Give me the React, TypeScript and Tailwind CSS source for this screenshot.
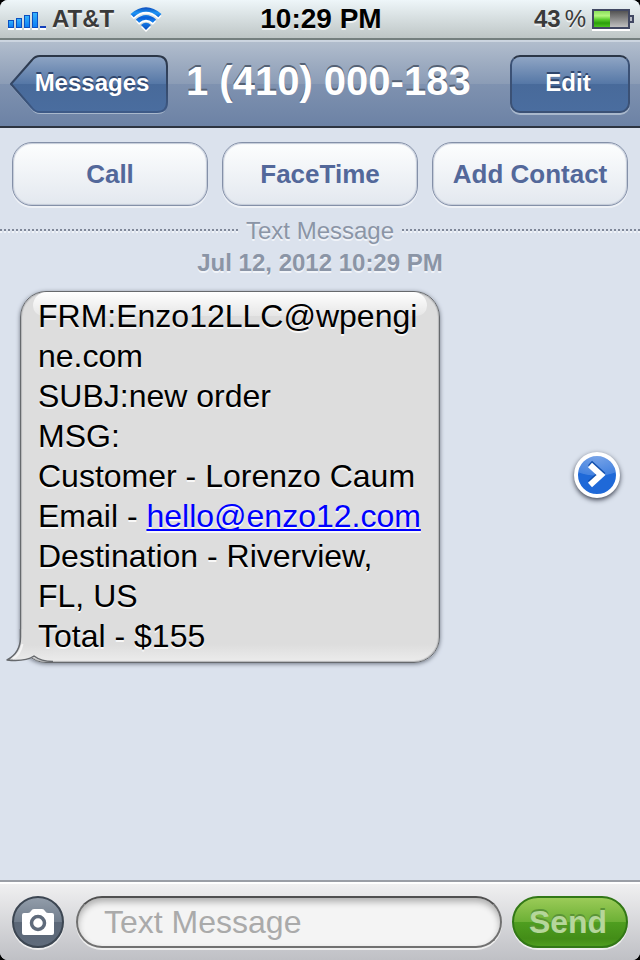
import React from "react";

function SignalIcon() {
  return (
    <svg width="40" height="18" viewBox="0 0 40 18" aria-label="Signal strength">
      <defs>
        <linearGradient id="bar" x1="0" y1="0" x2="0" y2="1">
          <stop offset="0" stopColor="#36b4fb" />
          <stop offset="1" stopColor="#0a7cf5" />
        </linearGradient>
      </defs>
      <g fill="#fff">
        <rect x="0" y="16" width="6" height="2" />
        <rect x="8" y="16" width="6" height="2" />
        <rect x="16" y="16" width="6" height="2" />
        <rect x="24" y="16" width="6" height="2" />
        <rect x="32" y="16" width="6" height="2" />
      </g>
      <g fill="url(#bar)" stroke="#0c4fc0">
        <rect x="0.5" y="8.5" width="5" height="7" />
        <rect x="8.5" y="6.5" width="5" height="9" />
        <rect x="16.5" y="3.5" width="5" height="12" />
        <rect x="24.5" y="0.5" width="5" height="15" />
      </g>
      <rect x="32" y="14" width="6" height="2" fill="#1440bb" />
    </svg>
  );
}

function WifiShape() {
  return (
    <>
      <path d="M0.5 7 Q16 -6.5 31.5 7 L28.3 10.2 Q16 -0.5 3.7 10.2 Z" />
      <path d="M5.9 12.6 Q16 3.4 26.1 12.6 L22.9 15.8 Q16 9.6 9.1 15.8 Z" />
      <path d="M11 18 Q16 13.6 21 18 L16 23 Z" />
    </>
  );
}

function WifiIcon() {
  return (
    <svg width="32" height="26" viewBox="0 0 32 26" aria-label="Wi-Fi">
      <defs>
        <linearGradient id="wifi" x1="0" y1="0" x2="0" y2="24" gradientUnits="userSpaceOnUse">
          <stop offset="0" stopColor="#0a47b8" />
          <stop offset="0.25" stopColor="#1f96f5" />
          <stop offset="0.45" stopColor="#0a5fd6" />
          <stop offset="0.6" stopColor="#1580ee" />
          <stop offset="1" stopColor="#0648b8" />
        </linearGradient>
      </defs>
      <g fill="#fff" transform="translate(0 2)">
        <WifiShape />
      </g>
      <g fill="url(#wifi)">
        <WifiShape />
      </g>
    </svg>
  );
}

function BatteryIcon() {
  return (
    <svg width="42" height="22" viewBox="0 0 42 22" aria-label="Battery">
      <defs>
        <linearGradient id="charge" x1="0" y1="0" x2="0" y2="1">
          <stop offset="0" stopColor="#8be05c" />
          <stop offset="0.3" stopColor="#b4f77e" />
          <stop offset="0.55" stopColor="#55cb27" />
          <stop offset="0.75" stopColor="#2a9d0a" />
          <stop offset="1" stopColor="#4cc51f" />
        </linearGradient>
        <linearGradient id="empty" x1="0" y1="0" x2="0" y2="1">
          <stop offset="0" stopColor="#4d4d4d" />
          <stop offset="1" stopColor="#c6c6c6" />
        </linearGradient>
      </defs>
      <rect x="0" y="20" width="38" height="2" fill="#fff" />
      <rect x="1" y="1" width="36" height="18" fill="url(#empty)" stroke="#414862" strokeWidth="2" />
      <rect x="2" y="2" width="16" height="16" fill="url(#charge)" />
      <path d="M38 7 H41 V13 H38" fill="#b9bcc6" stroke="#414862" strokeWidth="2" />
    </svg>
  );
}

function StatusBar() {
  return (
    <header className="grid h-10 grid-cols-[1fr_auto_1fr] items-center border-b-2 border-[#75807f] bg-linear-to-b from-[#eef6f9] to-[#bec6c6] pr-1.5 pl-2 text-2xl font-bold text-[#3a3a3a] [text-shadow:0_2px_0_#ffffffb0]">
      <div className="flex items-center">
        <span className="mt-1">
          <SignalIcon />
        </span>
        <span className="ml-1">AT&amp;T</span>
        <span className="ml-4 pt-0.5">
          <WifiIcon />
        </span>
      </div>
      <time className="text-[28px] text-black">10:29 PM</time>
      <div className="flex items-center justify-end">
        <span>43</span>
        <span className="ml-1 font-normal">%</span>
        <span className="ml-1.5 pt-0.5">
          <BatteryIcon />
        </span>
      </div>
    </header>
  );
}

function BackButton() {
  return (
    <button className="relative h-[58px] w-[158px] shrink-0 pb-0.5 pl-1.5 text-2xl font-bold text-white [text-shadow:0_-2px_0_#2f466c]">
      <svg className="absolute inset-0" width="158" height="60" viewBox="0 0 158 60" aria-hidden="true">
        <defs>
          <linearGradient id="back" x1="0" y1="0" x2="0" y2="1">
            <stop offset="0" stopColor="#8fa5c4" />
            <stop offset="0.5" stopColor="#5577a6" />
            <stop offset="0.5" stopColor="#486a9a" />
            <stop offset="1" stopColor="#4a6d9f" />
          </linearGradient>
          <linearGradient id="backEdge" x1="0" y1="0" x2="0" y2="1">
            <stop offset="0" stopColor="#2b3647" />
            <stop offset="1" stopColor="#3e5a87" />
          </linearGradient>
        </defs>
        <path
          d="M30 3 H147 Q157 3 157 12 V49 Q157 59 147 59 H30 Q25 59 22 55 L1 31 L22 6 Q25 3 30 3 Z"
          fill="#a9b8cc"
        />
        <path
          d="M30 1 H147 Q157 1 157 11 V47 Q157 57 147 57 H30 Q25 57 22 53 L1 29 L22 5 Q25 1 30 1 Z"
          fill="url(#back)"
          stroke="url(#backEdge)"
          strokeWidth="2"
        />
      </svg>
      <span className="relative">Messages</span>
    </button>
  );
}

function NavBar() {
  return (
    <nav className="flex h-22 items-center border-t-2 border-b-2 border-t-[#ccd5e0] border-b-[#2d3440] bg-[linear-gradient(to_bottom,#b1bdcd,#8b9cb6_50%,#7f92b0_50%,#6c82a5)] px-2.5">
      <BackButton />
      <h1 className="ml-[18px] grow pb-1.5 text-[40px] leading-none font-bold whitespace-nowrap text-white [text-shadow:0_-2px_0_#556275]">
        1 (410) 000-183
      </h1>
      <button className="h-[58px] w-[120px] shrink-0 rounded-[10px] border-2 border-[#3b5175] border-t-[#2b3647] bg-[linear-gradient(to_bottom,#8fa5c4,#5577a6_50%,#486a9a_50%,#4a6d9f)] pr-1 pb-0.5 text-2xl font-bold text-white shadow-[0_2px_0_#a9b8cc] [text-shadow:0_-2px_0_#2f466c]">
        Edit
      </button>
    </nav>
  );
}

function ActionButton({ children }: { children: React.ReactNode }) {
  return (
    <button className="h-16 rounded-[20px] border border-[#8490a8] bg-linear-to-b from-[#fdfefe] to-[#e3e8ef] text-[26px] font-bold whitespace-nowrap text-[#53689a] shadow-[0_2px_0_#eef1f6,inset_0_0_1px_1px_#c3cad8]">
      {children}
    </button>
  );
}

function DottedRule() {
  return (
    <span className="h-1 grow bg-[linear-gradient(to_bottom,#7f8798_50%,#f0f3f8_50%)] [mask-image:repeating-linear-gradient(to_right,#000_0_2px,transparent_2px_4px)]" />
  );
}

function BubbleTail() {
  return (
    <svg className="absolute -bottom-[3px] -left-[16px]" width="48" height="36" viewBox="0 0 48 36" aria-hidden="true">
      <defs>
        <linearGradient id="tail" x1="0" y1="0" x2="0" y2="1">
          <stop offset="0" stopColor="#dddddd" />
          <stop offset="0.5" stopColor="#dddddd" />
          <stop offset="1" stopColor="#ebebeb" />
        </linearGradient>
      </defs>
      <path d="M16 0 H48 V32 H44 Q36 32 29 27 Q21 33 2 31 Q16 24 16 8 Z" fill="url(#tail)" />
      <path
        d="M15.5 0 V8 Q15.5 24 2 31 Q20 33 29 27 Q36 32.5 48 32.5"
        fill="none"
        stroke="#66696d"
        strokeWidth="1.5"
        strokeLinejoin="round"
      />
      <path d="M8 29.5 Q15 26 17.5 15" fill="none" stroke="#f4f4f4" strokeWidth="2" />
    </svg>
  );
}

function MessageBubble() {
  return (
    <article className="relative w-[420px] shrink-0 rounded-[26px] border border-[#66696d] bg-[linear-gradient(to_top,#ececec,#dddddd_18px)] px-[17px] pt-1 pb-1.5 text-[32px] leading-10 text-black shadow-[0_1px_4px_#6f7683,inset_0_0_1px_1px_#b4b5b7] [text-shadow:0_2px_0_#f8f8f8]">
      <div className="absolute inset-x-3 top-0 h-6 rounded-t-[16px] rounded-b-[12px] bg-linear-to-b from-white to-[#e6e6e6]" />
      <BubbleTail />
      <p className="relative whitespace-nowrap">
        FRM:Enzo12LLC@wpengi
        <br />
        ne.com
        <br />
        SUBJ:new order
        <br />
        MSG:
        <br />
        Customer - Lorenzo Caum
        <br />
        Email -{" "}
        <a
          className="text-[#0000ff] underline decoration-2 underline-offset-2 [text-decoration-skip-ink:none]"
          href="mailto:hello@enzo12.com"
        >
          hello@enzo12.com
        </a>
        <br />
        Destination - Riverview,
        <br />
        FL, US
        <br />
        Total - $155
      </p>
    </article>
  );
}

function DetailButton() {
  return (
    <button
      aria-label="Message details"
      className="mb-1 flex size-[46px] items-center justify-center rounded-full border-4 border-white bg-[#216fdd] bg-[radial-gradient(ellipse_34px_20px_at_50%_0%,#78a4e8_0%,#4583e0_96%,#1f69d8_100%)] bg-no-repeat shadow-[0_2px_5px_#3c4250]"
    >
      <svg className="shrink-0" width="22" height="30" viewBox="0 0 22 30" fill="none" strokeWidth="6" aria-hidden="true">
        <path d="M4 3 L15 13 L4 23" stroke="#1350ad" />
        <path d="M4 5 L15 15 L4 25" stroke="#fff" />
      </svg>
    </button>
  );
}

function CameraIcon() {
  return (
    <svg width="34" height="28" viewBox="0 0 34 28" aria-hidden="true">
      <path
        fill="#fff"
        d="M3 5 H7 Q9 5 10 3 Q11 1 13 1 H21 Q23 1 24 3 Q25 5 27 5 H31 Q33 5 33 7 V25 Q33 27 31 27 H3 Q1 27 1 25 V7 Q1 5 3 5 Z"
      />
      <circle cx="17" cy="15" r="6.5" fill="none" stroke="#5f6b7b" strokeWidth="3.5" />
    </svg>
  );
}

function Composer() {
  return (
    <form
      className="flex h-20 items-center gap-2.5 border-t-2 border-[#9a9ea6] bg-linear-to-b from-[#f1f1f2] to-[#bfc0c5] px-3 pt-0.5 shadow-[inset_0_2px_0_#fff]"
      onSubmit={(event) => event.preventDefault()}
    >
      <button
        type="button"
        aria-label="Attach photo"
        className="mr-0.5 flex size-13 shrink-0 items-center justify-center rounded-full border-2 border-[#3c4652] bg-[linear-gradient(to_bottom,#929daa,#717d8c_50%,#5b6777_50%,#5f6b7b)] shadow-[0_2px_0_#eee]"
      >
        <CameraIcon />
      </button>
      <input
        aria-label="Message"
        placeholder="Text Message"
        className="h-13 min-w-0 grow rounded-full border-2 border-[#707070] border-t-[#505050] bg-[#f4f4f4] px-[26px] text-[32px] text-black shadow-[inset_0_4px_6px_#b0b0b0,0_2px_0_#eee] placeholder:text-[#aaaaaa] placeholder:opacity-100"
      />
      <button
        type="submit"
        className="h-13 w-[116px] shrink-0 rounded-full border-2 border-[#327816] bg-[linear-gradient(to_bottom,#9bcb58,#6cb035_50%,#4f9e20_50%,#438d17_85%,#4f9e20)] pr-1 text-[32px] leading-none font-bold text-[#b5d69b] shadow-[0_2px_0_#eee] [text-shadow:0_-2px_0_#5a9436]"
      >
        Send
      </button>
    </form>
  );
}

export default function App() {
  return (
    <div className="bg-black">
      <div className="flex min-h-screen flex-col overflow-hidden rounded-[8px] bg-[#dbe2ed] font-['Liberation_Sans',Arial,sans-serif]">
        <StatusBar />
        <NavBar />
        <main className="grow">
          <div className="grid grid-cols-3 gap-3.5 px-3 pt-3.5">
            <ActionButton>Call</ActionButton>
            <ActionButton>FaceTime</ActionButton>
            <ActionButton>Add Contact</ActionButton>
          </div>
          <div className="mt-[9px] text-center text-2xl leading-8 text-[#8b95a6] [text-shadow:0_2px_0_#f1f4f9]">
            <div className="flex items-center gap-2">
              <DottedRule />
              <span>Text Message</span>
              <DottedRule />
            </div>
            <time className="block font-bold">Jul 12, 2012 10:29 PM</time>
          </div>
          <div className="mt-3 flex items-center justify-between pr-5 pl-5">
            <MessageBubble />
            <DetailButton />
          </div>
        </main>
        <Composer />
      </div>
    </div>
  );
}
